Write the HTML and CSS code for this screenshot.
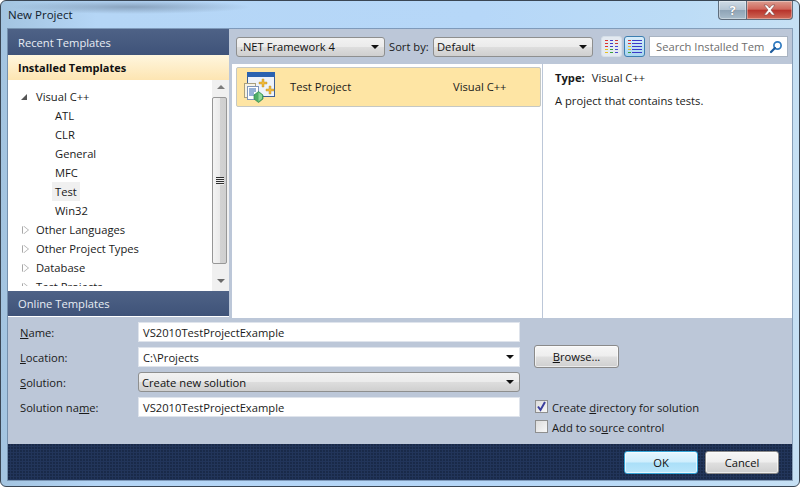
FILE: index.html
```html
<!DOCTYPE html>
<html lang="en">

<head>
    <meta charset="UTF-8">
    <title>New Project</title>
    <link rel="stylesheet" href="styles.css">
</head>

<body>
    <div class="window">
        <header class="titlebar">
            <span class="title">New Project</span>
            <div class="caption">
                <span class="cap-btn cap-help">?</span>
                <span class="cap-btn cap-close">
                    <svg width="15" height="12" viewBox="0 0 15 12">
                        <path d="M2 1h3l2.500 3 2.500-3h3l-4 5 4 5h-3l-2.500-3-2.500 3h-3l4-5z" fill="#fff" stroke="#7c4a48" stroke-width=".6"/>
                    </svg>
                </span>
            </div>
        </header>

        <div class="client">
            <div class="top">
                <aside class="side">
                    <div class="side-head">Recent Templates</div>
                    <div class="side-active">Installed Templates</div>
                    <div class="tree-wrap">
                        <ul class="tree">
                            <li><i class="tw tw-open"></i>Visual C++</li>
                            <li class="sub">ATL</li>
                            <li class="sub">CLR</li>
                            <li class="sub">General</li>
                            <li class="sub">MFC</li>
                            <li class="sub"><span class="picked">Test</span></li>
                            <li class="sub">Win32</li>
                            <li><i class="tw"></i>Other Languages</li>
                            <li><i class="tw"></i>Other Project Types</li>
                            <li><i class="tw"></i>Database</li>
                            <li><i class="tw"></i>Test Projects</li>
                        </ul>
                        <div class="scrollbar">
                            <span class="arrow arrow-up"></span>
                            <div class="thumb"><span class="grip"></span></div>
                            <span class="arrow arrow-down"></span>
                        </div>
                    </div>
                    <div class="side-head side-foot">Online Templates</div>
                </aside>

                <section class="main">
                    <div class="toolbar">
                        <div class="combo combo-fw">.NET Framework 4<i class="caret"></i></div>
                        <label class="sort-label">Sort by:</label>
                        <div class="combo combo-sort">Default<i class="caret"></i></div>
                        <span class="view-btn">
                            <svg width="18" height="18" viewBox="0 0 18 18">
                                <path d="M2 2h3v1H2zM2 5h3v1H2zM2 8h3v1H2z" fill="#d33"/>
                                <path d="M2 11h3v1H2zM2 14h3v1H2z" fill="#e8c020"/>
                                <path d="M7 2h3v1H7zM7 5h3v1H7zM7 8h3v1H7z" fill="#3a3ac8"/>
                                <path d="M7 11h3v1H7zM7 14h3v1H7z" fill="#3aa03a"/>
                                <path d="M12 2h3v1h-3zM12 5h3v1h-3z" fill="#c83a3a"/>
                                <path d="M12 8h3v1h-3zM12 11h3v1h-3zM12 14h3v1h-3z" fill="#4a4ad0"/>
                            </svg>
                        </span>
                        <span class="view-btn view-on">
                            <svg width="18" height="18" viewBox="0 0 18 18">
                                <path d="M2 2h3v1H2zM2 5h3v1H2z" fill="#d33"/>
                                <path d="M2 8h3v1H2zM2 11h3v1H2z" fill="#e8c020"/>
                                <path d="M2 14h3v1H2z" fill="#3aa03a"/>
                                <path d="M6 2h10v1H6zM6 5h10v1H6zM6 8h10v1H6zM6 11h10v1H6zM6 14h10v1H6z" fill="#3a3ac8"/>
                            </svg>
                        </span>
                        <div class="search">
                            <span>Search Installed Tem</span>
                            <svg width="14" height="14" viewBox="0 0 14 14">
                                <circle cx="8.500" cy="5.500" r="3.600" fill="none" stroke="#2f7ac0" stroke-width="1.700"/>
                                <path d="M6 8l-4 4" stroke="#1c5a9c" stroke-width="2.200" stroke-linecap="round"/>
                            </svg>
                        </div>
                    </div>
                    <div class="panes">
                        <div class="list">
                            <div class="item">
                                <svg class="item-icon" width="32" height="32" viewBox="0 0 32 32">
                                    <rect x="3.500" y="1.500" width="27" height="24" fill="#eef3fa" stroke="#3d5f94"/>
                                    <rect x="3" y="1" width="28" height="5" fill="#2a62b0"/>
                                    <path d="M18 8h2v3h3v2h-3v3h-2v-3h-3v-2h3z" fill="#f0b93a" stroke="#b98a20" stroke-width=".4"/>
                                    <path d="M25 15h2v3h3v2h-3v3h-2v-3h-3v-2h3z" fill="#f0b93a" stroke="#b98a20" stroke-width=".4"/>
                                    <rect x=".5" y="12.500" width="11" height="14" fill="#f7f3e4" stroke="#a89f80"/>
                                    <rect x="3.500" y="15.500" width="11" height="13" fill="#fff" stroke="#7f95b8"/>
                                    <path d="M5 18h7M5 20h7M5 22h5M5 24h6" stroke="#2d62ad"/>
                                    <path d="M14.500 20.500l4.500 3.500v4l-4.500 3.500-4.500-3.500v-4z" fill="#4fae66" stroke="#2f8a50" stroke-width=".7"/>
                                    <path d="M14.500 21.500v9l3.500-3v-3.500z" fill="#8ed69a"/>
                                </svg>
                                <span class="item-name">Test Project</span>
                                <span class="item-lang">Visual C++</span>
                            </div>
                        </div>
                        <div class="details">
                            <p class="type-line"><b>Type:</b><span>Visual C++</span></p>
                            <p class="desc">A project that contains tests.</p>
                        </div>
                    </div>
                </section>
            </div>

            <div class="form">
                <label><u>N</u>ame:</label>
                <div class="field">VS2010TestProjectExample</div>
                <div></div>

                <label><u>L</u>ocation:</label>
                <div class="field">C:\Projects<i class="caret"></i></div>
                <div class="browse-cell"><button class="btn btn-browse"><u>B</u>rowse...</button></div>

                <label><u>S</u>olution:</label>
                <div class="combo combo-solution">Create new solution<i class="caret"></i></div>
                <div></div>

                <label>Solution na<u>m</u>e:</label>
                <div class="field">VS2010TestProjectExample</div>
                <div class="checks">
                    <div class="check"><i class="box">
                        <svg width="13" height="13" viewBox="0 0 13 13">
                            <path d="M3 6.500l2.500 3.500 4.500-8" fill="none" stroke="#3b3f9e" stroke-width="2"/>
                        </svg>
                    </i><span>Create <u>d</u>irectory for solution</span></div>
                    <div class="check"><i class="box"></i><span>Add to so<u>u</u>rce control</span></div>
                </div>
            </div>

            <footer class="footer">
                <button class="btn btn-ok">OK</button>
                <button class="btn btn-cancel">Cancel</button>
            </footer>
        </div>
    </div>
</body>

</html>
```

FILE: styles.css
```css
* {
    box-sizing: border-box;
}

html,
body {
    margin: 0;
    padding: 0;
    height: 487px;
    overflow: hidden;
}

body {
    font-family: "Open Sans", "Noto Sans", sans-serif;
    font-size: 11.2px;
    color: #1a1a1a;
    background: #fff;
}

.window {
    width: 800px;
    height: 487px;
    display: flex;
    flex-direction: column;
    padding: 0 7px 6px 7px;
    border: 1px solid #3a4654;
    border-radius: 6px;
    background:
        radial-gradient(ellipse 120px 7px at 130px 6px, rgba(70, 85, 105, .4), transparent),
        linear-gradient(90deg, #a3c4e0 0, #b5d6f6 12%, #b6d7f8 60%, #bcdcf6 85%, #c6e0f4 100%);
}

.titlebar {
    height: 28px;
    flex: none;
    display: flex;
    justify-content: space-between;
    align-items: flex-start;
    margin-right: -7px;
    padding-right: 6px;
}

.title {
    margin-top: 6px;
    font-size: 11.500px;
    color: #10202c;
}

.caption {
    display: flex;
}

.cap-btn {
    height: 19px;
    display: flex;
    align-items: center;
    justify-content: center;
    border: 1px solid #5f6d7c;
    border-top: none;
    box-shadow: inset 0 0 0 1px rgba(255, 255, 255, .35);
}

.cap-help {
    width: 28px;
    border-radius: 0 0 0 4px;
    border-right: none;
    font-size: 13px;
    font-weight: bold;
    color: #fff;
    text-shadow: 0 0 1px #445;
    background: linear-gradient(#cfdbe6 0, #b4c4d3 48%, #8fa4b6 52%, #a8bccb 100%);
}

.cap-close {
    width: 47px;
    border-radius: 0 0 4px 0;
    background: linear-gradient(#dc9c90 0, #d0675c 45%, #b8342c 52%, #cf6a58 100%);
}

.client {
    flex: 1;
    display: flex;
    flex-direction: column;
    background: #bcc7d8;
    box-shadow: 0 0 0 1px rgba(60, 80, 110, .45);
}

.top {
    height: 289px;
    flex: none;
    display: flex;
}

.side {
    width: 221px;
    height: 288px;
    flex: none;
    display: flex;
    flex-direction: column;
    background: #fff;
    border-bottom: 1px solid #fff;
}

.side-head {
    height: 26px;
    flex: none;
    display: flex;
    align-items: center;
    padding-left: 10px;
    color: #e8edf4;
    background: linear-gradient(#4e6286, #3f5379);
}

.side-foot {
    height: 25px;
}

.side-active {
    height: 25px;
    flex: none;
    display: flex;
    align-items: center;
    padding-left: 10px;
    font-size: 11px;
    font-weight: bold;
    color: #111;
    background: linear-gradient(#fff6de, #fde5b2);
}

.tree-wrap {
    flex: 1;
    min-height: 0;
    display: flex;
}

/* the list stops a few pixels short of the footer, so the last row is cut */
.tree {
    flex: 1;
    height: 206px;
    margin: 0;
    padding: 7px 0 0 0;
    list-style: none;
    overflow: hidden;
}

.tree li {
    height: 19px;
    display: flex;
    align-items: center;
    padding-left: 28px;
    position: relative;
}

.tree .sub {
    padding-left: 47px;
}

.picked {
    background: #f0f0f0;
    padding: 2px 3px;
    margin-left: -3px;
}

.tw {
    position: absolute;
    left: 15px;
    top: 6px;
    width: 0;
    height: 0;
    border-left: 5px solid #fff;
    border-top: 4px solid transparent;
    border-bottom: 4px solid transparent;
    filter: drop-shadow(1px 0 0 #a8a8a8) drop-shadow(-1px 0 0 #a8a8a8);
}

.tw-open {
    left: 13px;
    top: 7px;
    border-left: 6px solid transparent;
    border-top: none;
    border-bottom: 6px solid #555;
    filter: none;
}

.scrollbar {
    width: 17px;
    flex: none;
    display: flex;
    flex-direction: column;
    align-items: center;
    background: #f0f0f0;
}

.arrow {
    height: 17px;
    flex: none;
    width: 0;
    margin-top: 5px;
    border-left: 4px solid transparent;
    border-right: 4px solid transparent;
}

.arrow-up {
    height: 0;
    margin-bottom: 8px;
    border-bottom: 4px solid #7c7c7c;
}

.arrow-down {
    height: 0;
    margin-top: 15px;
    border-top: 4px solid #6a6a6a;
}

.thumb {
    width: 15px;
    height: 167px;
    margin-left: -2px;
    flex: none;
    display: flex;
    align-items: center;
    justify-content: center;
    border: 1px solid #979797;
    border-radius: 2px;
    background: linear-gradient(90deg, #f4f4f4 0, #ebebeb 50%, #d2d2d2 55%, #cfcfcf 100%);
}

.grip {
    width: 8px;
    height: 8px;
    background: repeating-linear-gradient(#2f2f2f 0, #2f2f2f 1px, #eee 1px, #eee 2px);
}

.main {
    flex: 1;
    min-width: 0;
    display: flex;
    flex-direction: column;
    margin-left: 3px;
}

.toolbar {
    height: 35px;
    flex: none;
    display: flex;
    align-items: center;
    padding: 0 0 0 4px;
}

.combo {
    position: relative;
    display: flex;
    align-items: center;
    height: 20px;
    padding-left: 3px;
    color: #111;
    border: 1px solid #8e8f8f;
    border-radius: 3px;
    background: linear-gradient(#f2f2f2 0, #ebebeb 48%, #dddddd 52%, #cfcfcf 100%);
}

.combo-fw {
    width: 149px;
    flex: none;
}

.combo-sort {
    width: 160px;
    flex: none;
}

.caret {
    position: absolute;
    right: 5px;
    top: 7px;
    width: 0;
    height: 0;
    border-left: 4px solid transparent;
    border-right: 4px solid transparent;
    border-top: 4px solid #111;
}

.sort-label {
    width: 44px;
    flex: none;
    margin-left: 4px;
    white-space: nowrap;
}

.view-btn {
    width: 21px;
    height: 21px;
    margin-left: 2px;
    flex: none;
    display: flex;
    align-items: center;
    justify-content: center;
    border: 1px solid #d6dfe8;
    border-radius: 3px;
    background: #e4eaf1;
}

.combo-sort + .view-btn {
    margin-left: 8px;
}

.view-on {
    border-color: #3c7fb1;
    background: linear-gradient(#d9eefb, #a9d5f0);
}

.search {
    width: 139px;
    height: 21px;
    margin-left: 4px;
    flex: none;
    display: flex;
    align-items: center;
    justify-content: space-between;
    padding: 0 4px 0 6px;
    color: #6d6d6d;
    background: #fff;
    border: 1px solid #a9b4c2;
    white-space: nowrap;
    overflow: hidden;
}

.panes {
    flex: 1;
    display: flex;
    background: #fff;
}

.list {
    width: 311px;
    flex: none;
    padding: 3px 1px 0 4px;
    border-right: 1px solid #bcc7d8;
}

.item {
    height: 40px;
    display: flex;
    align-items: center;
    padding-left: 7px;
    background: #fee5a4;
    border: 1px solid #c5c8c4;
    border-radius: 2px;
}

.item-icon {
    flex: none;
}

.item-name {
    width: 163px;
    margin-left: 14px;
    margin-bottom: 2px;
}

.item-lang {
    margin-bottom: 2px;
}

.details {
    flex: 1;
    padding: 6px 12px;
}

.details p {
    margin: 0 0 8px 0;
    line-height: 15px;
}

.type-line span {
    margin-left: 7px;
}

.form {
    flex: 1;
    display: grid;
    grid-template-columns: 118px 382px 1fr;
    grid-auto-rows: 20px;
    row-gap: 5px;
    align-content: start;
    align-items: center;
    padding: 4px 0 0 12px;
}

.form u {
    text-decoration-thickness: 1px;
}

.field {
    position: relative;
    height: 20px;
    display: flex;
    align-items: center;
    padding-left: 4px;
    background: #fff;
    border: 1px solid #dfe4ec;
}

.browse-cell {
    height: 20px;
    padding-left: 14px;
}

.btn {
    font: inherit;
    color: #111;
    padding: 0;
    border: 1px solid #8a8a8a;
    border-radius: 3px;
    background: linear-gradient(#f6f6f6 0, #eeeeee 48%, #dfdfdf 52%, #cfcfcf 100%);
    box-shadow: inset 0 0 0 1px rgba(255, 255, 255, .6);
}

.btn-browse {
    width: 85px;
    height: 23px;
    margin-top: -2px;
}

.checks {
    align-self: start;
    display: flex;
    flex-direction: column;
    gap: 7px;
    padding: 3px 0 0 15px;
}

.check {
    height: 13px;
    display: flex;
    align-items: center;
    white-space: nowrap;
}

.check span {
    padding-top: 2px;
}

.box {
    width: 13px;
    height: 13px;
    flex: none;
    margin-right: 4px;
    display: flex;
    border: 1px solid #8e8f8f;
    background: linear-gradient(135deg, #dcdcdc, #f8f8f8);
}

.box svg {
    margin: -1px;
}

.footer {
    height: 36px;
    flex: none;
    display: flex;
    justify-content: flex-end;
    align-items: center;
    gap: 7px;
    padding-right: 13px;
    background-color: #22355a;
    background-image: radial-gradient(circle at 1px 1px, rgba(10, 20, 40, .35) 0, rgba(10, 20, 40, .35) 1px, transparent 1px);
    background-size: 3px 3px;
}

.btn-ok,
.btn-cancel {
    width: 74px;
    height: 23px;
}

.btn-ok {
    border-color: #35a4d6;
    background: linear-gradient(#e6f6fe 0, #cfeefd 48%, #aadff8 52%, #b9e6fb 100%);
}
```
